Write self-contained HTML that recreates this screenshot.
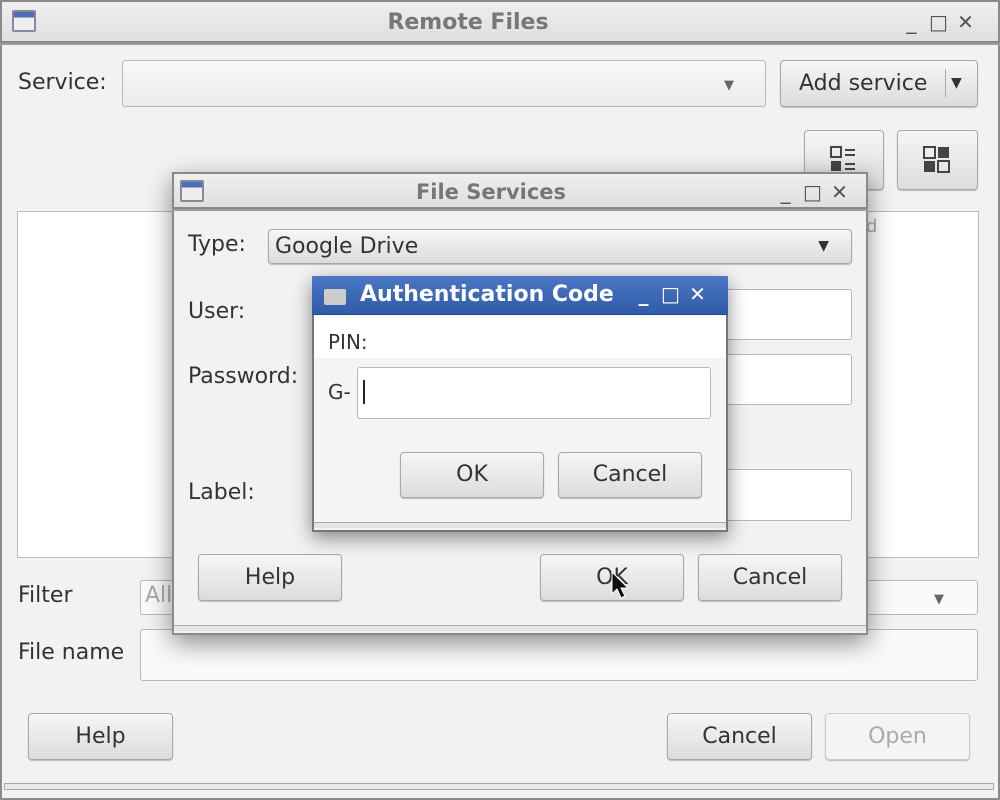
<!DOCTYPE html>
<html><head><style>
*{box-sizing:border-box;margin:0;padding:0}
body{width:1000px;height:800px;background:#5a5a5a;position:relative;overflow:hidden;font-family:"DejaVu Sans","Liberation Sans",sans-serif;color:#333;font-size:22px}
.a{position:absolute}
.win{position:absolute;background:#f2f2f2;box-shadow:inset 0 0 0 2px #8a8a8a}
.tb{position:absolute;left:0;right:0;top:0;background:linear-gradient(#f0f0f0,#dedede);border-bottom:2px solid #9a9a9a;box-shadow:inset 0 0 0 2px #8a8a8a}
.tt{position:absolute;left:0;right:0;text-align:center;font-weight:bold;color:#777;white-space:nowrap}
.btn{position:absolute;border:1px solid #a8a8a8;border-radius:4px;background:linear-gradient(#f6f6f6,#dcdcdc);text-align:center;color:#333;box-shadow:0 1px 1px #bbb;white-space:nowrap}
.inp{position:absolute;background:#fafafa;border:1px solid #b8b8b8;border-radius:3px}
.lbl{position:absolute;color:#333;white-space:nowrap}
.ico{position:absolute;width:24px;height:22px;border:2px solid #889;background:linear-gradient(#4a6fb5 0 30%,#eee 30%);border-radius:2px}
.wc{position:absolute;color:#555;font-size:20px;white-space:nowrap;width:80px}
.wc span{display:inline-block;width:27px;text-align:center}
</style></head><body>
<!-- Main window -->
<div class="win" style="left:0;top:0;width:1000px;height:800px">
 <div class="tb" style="height:45px"></div>
 <div class="tt" style="top:10px;font-size:22px;padding-right:64px">Remote Files</div>
 <div class="ico" style="left:12px;top:10px"></div>
 <div class="wc" style="left:898px;top:10px"><span>_</span><span>□</span><span>✕</span></div>
 <div class="lbl" style="left:18px;top:70px">Service:</div>
 <div class="inp" style="left:122px;top:60px;width:644px;height:47px;background:linear-gradient(#f8f8f8,#ececec)"></div>
 <div class="a" style="left:724px;top:78px;font-size:13px;color:#666">▼</div>
 <div class="btn" style="left:780px;top:60px;width:198px;height:47px;line-height:45px;text-align:left;padding-left:18px">Add service<span style="position:absolute;left:164px;top:8px;height:28px;border-left:1px solid #aaa"></span><span style="position:absolute;left:170px;font-size:14px">▼</span></div>
 <div class="btn" style="left:804px;top:130px;width:80px;height:60px"></div>
 <div class="btn" style="left:897px;top:130px;width:81px;height:60px"></div>
 <svg class="a" style="left:829px;top:145px" width="30" height="30"><rect x="2" y="2" width="10" height="10" fill="none" stroke="#444" stroke-width="2"/><rect x="2" y="16" width="10" height="10" fill="#444"/><path d="M16 5h10M16 10h10M16 19h10M16 24h10" stroke="#444" stroke-width="2"/></svg>
 <svg class="a" style="left:922px;top:145px" width="30" height="30"><rect x="2" y="2" width="11" height="11" fill="none" stroke="#444" stroke-width="2"/><rect x="16" y="2" width="11" height="11" fill="#444"/><rect x="2" y="16" width="11" height="11" fill="#444"/><rect x="16" y="16" width="11" height="11" fill="none" stroke="#444" stroke-width="2"/></svg>
 <div class="a" style="left:17px;top:211px;width:962px;height:347px;background:#fff;border:1px solid #bbb"></div>
 <div class="a" style="left:866px;top:216px;color:#aaa;font-size:18px">d</div>
 <div class="lbl" style="left:18px;top:583px">Filter</div>
 <div class="inp" style="left:140px;top:580px;width:838px;height:35px"></div>
 <div class="a" style="left:145px;top:583px;color:#aaa">All</div>
 <div class="a" style="left:934px;top:592px;font-size:13px;color:#666">▼</div>
 <div class="lbl" style="left:18px;top:640px">File name</div>
 <div class="inp" style="left:140px;top:629px;width:838px;height:52px"></div>
 <div class="btn" style="left:28px;top:713px;width:145px;height:47px;line-height:45px">Help</div>
 <div class="btn" style="left:667px;top:713px;width:145px;height:47px;line-height:45px">Cancel</div>
 <div class="btn" style="left:825px;top:713px;width:145px;height:47px;line-height:45px;color:#aaa;background:#f4f4f4;border-color:#ccc">Open</div>
 <div class="a" style="left:4px;top:783px;width:990px;height:7px;border:1px solid #aaa;background:#e8e8e8"></div>
</div>
<!-- File services -->
<div class="win" style="left:172px;top:172px;width:696px;height:463px;box-shadow:inset 0 0 0 2px #8a8a8a,0 8px 24px rgba(0,0,0,.45)">
 <div class="tb" style="height:39px"></div>
 <div class="tt" style="top:8px;font-size:21px;padding-right:58px">File Services</div>
 <div class="ico" style="left:8px;top:8px"></div>
 <div class="wc" style="left:600px;top:8px"><span>_</span><span>□</span><span>✕</span></div>
 <div class="lbl" style="left:16px;top:60px">Type:</div>
 <div class="btn" style="left:96px;top:57px;width:584px;height:35px;line-height:33px;text-align:left;padding-left:6px">Google Drive<span style="position:absolute;right:22px;font-size:14px">▼</span></div>
 <div class="lbl" style="left:16px;top:127px">User:</div>
 <div class="lbl" style="left:16px;top:192px">Password:</div>
 <div class="lbl" style="left:16px;top:308px">Label:</div>
 <div class="inp" style="left:520px;top:117px;width:160px;height:51px;background:#fff"></div>
 <div class="inp" style="left:520px;top:182px;width:160px;height:51px;background:#fff"></div>
 <div class="inp" style="left:520px;top:297px;width:160px;height:52px;background:#fff"></div>
 <div class="btn" style="left:26px;top:382px;width:144px;height:47px;line-height:45px">Help</div>
 <div class="btn" style="left:368px;top:382px;width:144px;height:47px;line-height:45px">OK</div>
 <div class="btn" style="left:526px;top:382px;width:144px;height:47px;line-height:45px">Cancel</div>
 <div class="a" style="left:2px;top:453px;width:692px;height:6px;border-top:1px solid #aaa;background:#e4e4e4"></div>
</div>
<svg class="a" style="left:610px;top:570px" width="18" height="30"><path d="M2 2v22l5-5 4 9 4-2-4-8h7z" fill="#111" stroke="#fff" stroke-width="1"/></svg>
<!-- Auth -->
<div class="win" style="left:312px;top:276px;width:416px;height:256px;background:#f4f4f4;box-shadow:inset 0 0 0 2px #777,0 6px 18px rgba(0,0,0,.45)">
 <div class="a" style="left:0;top:0;right:0;height:39px;background:linear-gradient(#4a76c4,#2f5ba8);border-bottom:1px solid #2a4f90"></div>
 <div class="a" style="left:12px;top:13px;width:22px;height:16px;background:#ccc;border-radius:2px"></div>
 <div class="a" style="left:48px;top:6px;color:#fff;font-weight:bold;font-size:22px;white-space:nowrap">Authentication Code</div>
 <div class="wc" style="left:318px;top:6px;color:#fff;font-weight:bold"><span>_</span><span>□</span><span>✕</span></div>
 <div class="a" style="left:2px;top:40px;width:412px;height:42px;background:#fff"></div>
 <div class="lbl" style="left:16px;top:54px;font-size:20px">PIN:</div>
 <div class="lbl" style="left:16px;top:104px;font-size:20px">G-</div>
 <div class="inp" style="left:45px;top:91px;width:354px;height:52px;background:#fff"></div>
 <div class="a" style="left:51px;top:104px;width:2px;height:24px;background:#222"></div>
 <div class="btn" style="left:88px;top:176px;width:144px;height:46px;line-height:44px">OK</div>
 <div class="btn" style="left:246px;top:176px;width:144px;height:46px;line-height:44px">Cancel</div>
 <div class="a" style="left:2px;top:246px;width:412px;height:6px;border-top:1px solid #aaa;background:#e4e4e4"></div>
</div>
</body></html>
